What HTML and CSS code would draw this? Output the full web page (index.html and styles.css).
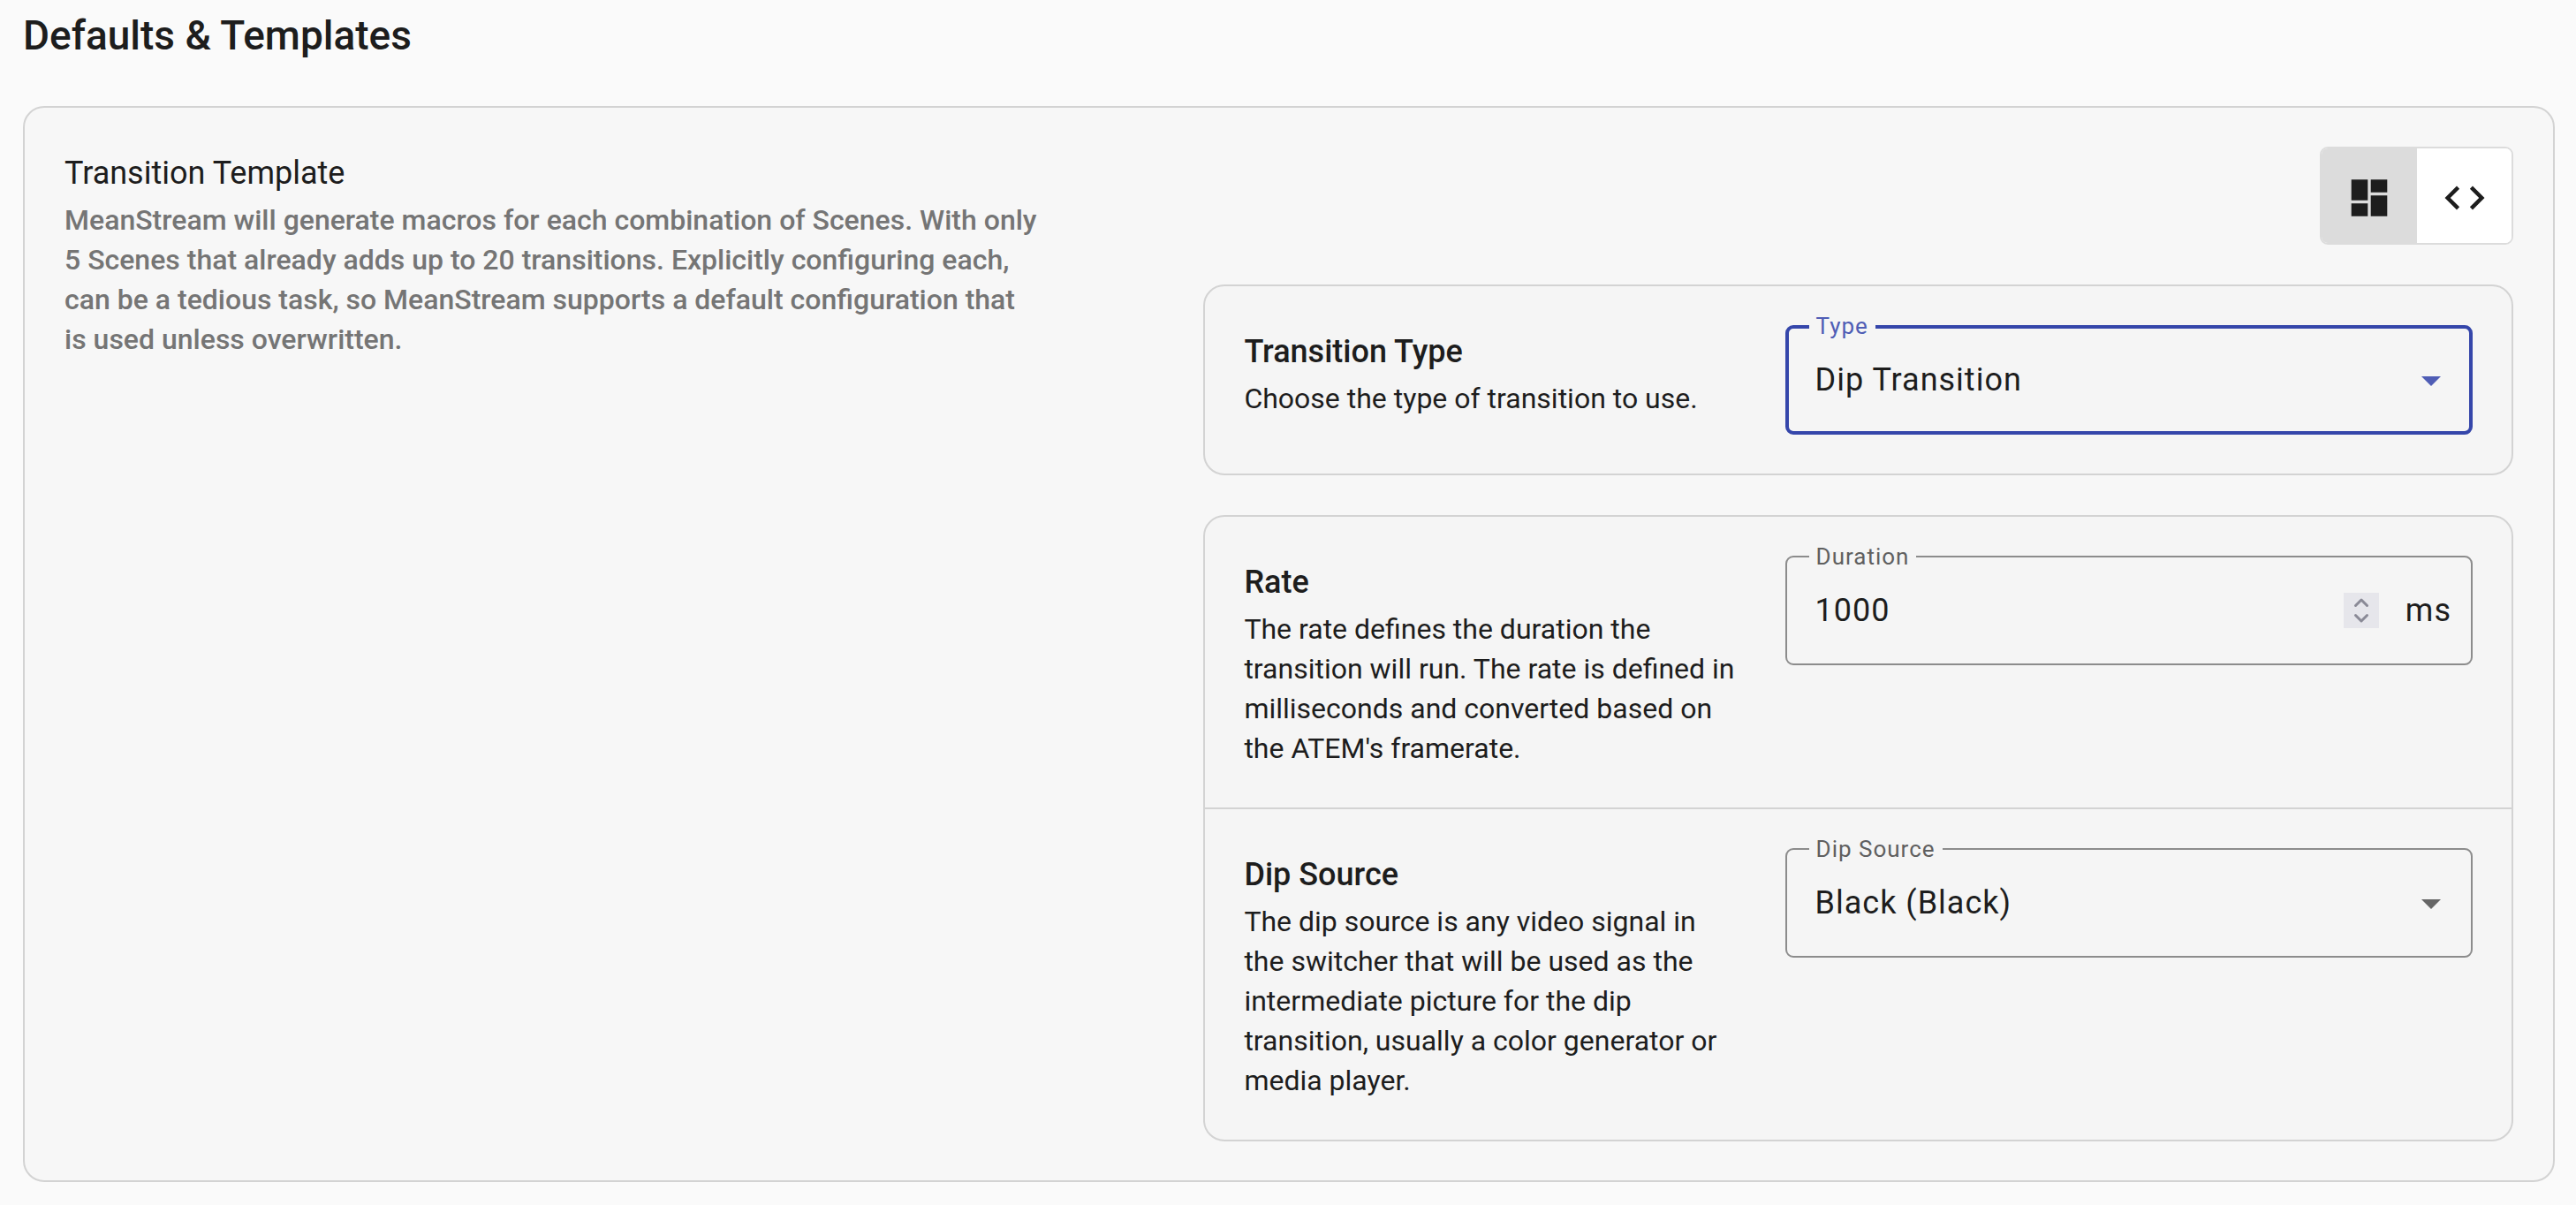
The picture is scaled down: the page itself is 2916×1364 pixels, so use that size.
FILE: index.html
```html
<!DOCTYPE html>
<html lang="en">
<head>
  <meta charset="utf-8">
  <meta name="viewport" content="width=device-width, initial-scale=1">
  <title>Defaults &amp; Templates</title>
  <link rel="stylesheet" href="styles.css">
</head>
<body>
  <main class="page">
    <h1 class="page-title">Defaults &amp; Templates</h1>

    <section class="panel">
      <div class="intro">
        <h2 class="intro-title">Transition Template</h2>
        <p class="text text-muted">MeanStream will generate macros for each combination of Scenes. With only 5 Scenes that already adds up to 20 transitions. Explicitly configuring each, can be a tedious task, so MeanStream supports a default configuration that is used unless overwritten.</p>
      </div>

      <div class="settings">
        <div class="view-toggle" role="group" aria-label="Editor view">
          <button class="toggle-button is-selected" type="button" aria-label="Form view" aria-pressed="true">
            <svg class="toggle-icon" viewBox="0 0 54 54" aria-hidden="true">
              <path d="M6.7 6.3h18.6v23.4H6.7zM6.7 33.3h18.6v14.4H6.7zM28.7 6.3h18.6v14.4H28.7zM28.7 24.3h18.6v23.4H28.7z"/>
            </svg>
          </button>
          <button class="toggle-button" type="button" aria-label="Code view" aria-pressed="false">
            <svg class="toggle-icon" viewBox="0 0 24 24" aria-hidden="true">
              <path d="M9.4 16.6 4.8 12l4.6-4.6L8 6l-6 6 6 6zM14.6 16.6l4.6-4.6-4.6-4.6L16 6l6 6-6 6z"/>
            </svg>
          </button>
        </div>

        <div class="card">
          <div class="row">
            <div>
              <h3 class="row-title">Transition Type</h3>
              <p class="text">Choose the type of transition to use.</p>
            </div>
            <div class="field is-active">
              <select class="control" id="type">
                <option>Dip Transition</option>
              </select>
              <label class="field-label" for="type">Type</label>
              <svg class="arrow" viewBox="0 0 22 11" aria-hidden="true"><path d="M0 0h22L11 11z"/></svg>
            </div>
          </div>
        </div>

        <div class="card">
          <div class="row">
            <div>
              <h3 class="row-title">Rate</h3>
              <p class="text">The rate defines the duration the transition will run. The rate is defined in milliseconds and converted based on the ATEM's framerate.</p>
            </div>
            <div class="field">
              <div class="control control-group">
                <input class="number" id="duration" type="number" value="1000">
                <svg class="spinner" viewBox="0 0 40 40" aria-hidden="true">
                  <path d="M13.500 14.500 20 8l6.500 6.500M13.500 25.500 20 32l6.500-6.500"/>
                </svg>
                <span class="suffix">ms</span>
              </div>
              <label class="field-label" for="duration">Duration</label>
            </div>
          </div>
          <div class="row">
            <div>
              <h3 class="row-title">Dip Source</h3>
              <p class="text">The dip source is any video signal in the switcher that will be used as the intermediate picture for the dip transition, usually a color generator or media player.</p>
            </div>
            <div class="field">
              <select class="control" id="dip-source">
                <option>Black (Black)</option>
              </select>
              <label class="field-label" for="dip-source">Dip Source</label>
              <svg class="arrow" viewBox="0 0 22 11" aria-hidden="true"><path d="M0 0h22L11 11z"/></svg>
            </div>
          </div>
        </div>
      </div>
    </section>
  </main>
</body>
</html>
```

FILE: styles.css
```css
:root {
  --page: #fafafa;
  --panel: #f7f7f7;
  --card: #f5f5f5;
  --line: #d3d3d3;
  --ink: #1d1d1d;
  --muted: #757575;
  --outline: #8c8c8c;
  --primary: #3546aa;
}

* {
  box-sizing: border-box;
}

body {
  margin: 0;
  background: var(--page);
  color: var(--ink);
  font-family: Roboto, "Liberation Sans", sans-serif;
  font-size: 32px;
  line-height: 45px;
}

h1,
h2,
h3,
p {
  margin: 0;
}

.page {
  padding: 12px 24px 26px 26px;
}

.page-title {
  margin-bottom: 52px;
  font-size: 46px;
  font-weight: 500;
  line-height: 56px;
}

.panel {
  display: grid;
  grid-template-columns: 21fr 25fr;
  gap: 44px;
  padding: 44px 45px;
  background: var(--panel);
  border: 2px solid var(--line);
  border-radius: 24px;
}

.intro-title,
.row-title {
  font-size: 36px;
  line-height: 61px;
}

.intro-title {
  font-weight: 400;
}

.row-title {
  font-weight: 500;
}

.intro .text {
  max-width: 1105px;
}

.text-muted {
  color: var(--muted);
  font-weight: 500;
}

.settings {
  display: flex;
  flex-direction: column;
  gap: 45px;
  min-width: 0;
}

/* View switch */

.view-toggle {
  display: flex;
  align-self: flex-end;
  overflow: hidden;
  background: #fff;
  border: 2px solid #dcdcdc;
  border-radius: 9px;
}

.toggle-button {
  display: flex;
  align-items: center;
  justify-content: center;
  width: 107px;
  height: 107px;
  padding: 4px 0 0;
  background: #fff;
  border: 0;
  color: var(--ink);
}

.toggle-button.is-selected {
  width: 108px;
  background: #dcdcdc;
}

.toggle-icon {
  width: 54px;
  height: 54px;
  fill: currentColor;
}

/* Setting cards */

.card {
  background: var(--card);
  border: 2px solid var(--line);
  border-radius: 24px;
}

.row {
  display: grid;
  grid-template-columns: 13fr 18fr;
  align-items: start;
  gap: 50px;
  padding: 44px;
}

.row + .row {
  border-top: 2px solid var(--line);
}

/* Outlined fields */

.field {
  position: relative;
  font-size: 36px;
  letter-spacing: 1px;
}

.control {
  display: block;
  width: 100%;
  height: 124px;
  padding: 0 32px;
  appearance: none;
  background: transparent;
  border: 2px solid var(--outline);
  border-radius: 9px;
  color: var(--ink);
  font: inherit;
  letter-spacing: inherit;
  outline: 0;
}

.is-active .control {
  padding: 0 30px;
  border: 4px solid var(--primary);
}

.control-group {
  display: flex;
  align-items: center;
  padding-right: 22px;
}

.number {
  flex: 1;
  min-width: 0;
  padding: 0;
  appearance: textfield;
  background: transparent;
  border: 0;
  color: inherit;
  font: inherit;
  letter-spacing: inherit;
  outline: 0;
}

.number::-webkit-inner-spin-button {
  display: none;
}

.spinner {
  width: 40px;
  height: 40px;
  margin-right: 30px;
  background: #e6e6eb;
  fill: none;
  stroke: #8a8a96;
  stroke-width: 3;
  stroke-linecap: round;
  stroke-linejoin: round;
}

.field-label {
  position: absolute;
  top: -12px;
  left: 27px;
  padding: 0 8px;
  background: var(--card);
  color: #606060;
  font-size: 26px;
  line-height: 26px;
}

.is-active .field-label {
  color: #4f5db5;
}

.arrow {
  position: absolute;
  top: 58px;
  right: 36px;
  width: 22px;
  height: 11px;
  fill: #666;
  pointer-events: none;
}

.is-active .arrow {
  fill: #4f5db5;
}
```
